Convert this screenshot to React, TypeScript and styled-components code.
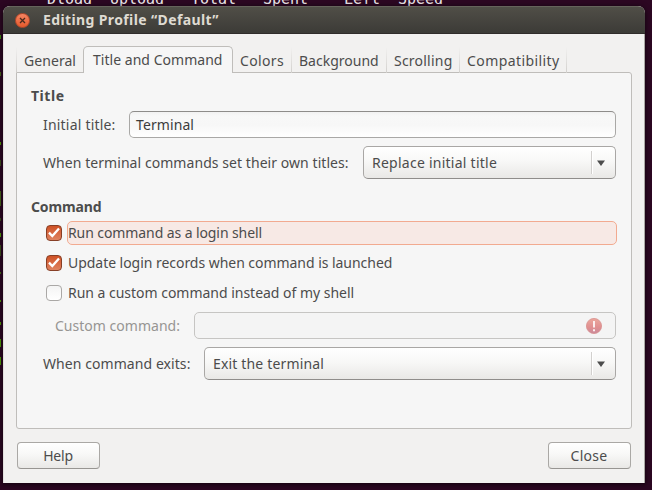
import React from "react";
import styled, { createGlobalStyle } from "styled-components";

const Global = createGlobalStyle`
  * { box-sizing: border-box; }
  html, body { margin: 0; padding: 0; overflow: hidden; }
  body { font-family: "Noto Sans", sans-serif; font-size: 14px; color: #4c4c4c; }
`;

const Desktop = styled.div`
  position: relative;
  width: 652px;
  height: 490px;
  padding: 6px 7px 7px 3px;
  background: #2c0722;
  overflow: hidden;
`;

const TerminalHeader = styled.div`
  position: absolute;
  left: 47px;
  top: -9px;
  font: 15px/17px "DejaVu Sans Mono", monospace;
  letter-spacing: -0.03px;
  white-space: pre;
  color: #eee9ec;
`;

const TerminalMark = styled.i<{ $y: number; $h: number; $c: string }>`
  position: absolute;
  left: 0;
  top: ${(p) => p.$y}px;
  width: 1px;
  height: ${(p) => p.$h}px;
  background: ${(p) => p.$c};
`;

const Window = styled.section`
  position: relative;
  width: 642px;
  height: 477px;
  display: flex;
  flex-direction: column;
  border-radius: 7px 7px 0 0;
  background: #f2f1f0;
  box-shadow: 0 1px 5px 1px rgba(0, 0, 0, 0.5);
  overflow: hidden;
`;

const TitleBar = styled.header`
  height: 28px;
  flex: none;
  display: flex;
  align-items: center;
  gap: 13px;
  padding: 0 12px;
  color: #dfdbd2;
  background: linear-gradient(#504e47, #3c3b37);
  border-top: 1px solid #65635b;
  border-bottom: 1px solid #302c2b;
`;

const CloseDot = styled.span`
  width: 15px;
  height: 15px;
  display: flex;
  border-radius: 50%;
  border: 1px solid #b8492a;
  background: linear-gradient(#f58462, #e65a2c);
  svg { margin: auto; }
`;

const Text = styled.span<{ $ls?: number; $bold?: boolean; $dim?: boolean }>`
  line-height: 20px;
  white-space: nowrap;
  letter-spacing: ${(p) => p.$ls ?? 0}px;
  font-weight: ${(p) => (p.$bold ? 700 : 400)};
  ${(p) => p.$dim && "color: #979593;"}
`;

const Body = styled.div`
  flex: 1;
  display: flex;
  flex-direction: column;
  padding: 12px 13px 14px;
  border: solid #aaa8a4;
  border-width: 0 1px 1px 0;
  border-left: 1px solid #e2e0dd;
`;

const Tabs = styled.nav`
  height: 27px;
  flex: none;
  display: flex;
  align-items: flex-end;
  margin: 0 -1px -1px;
  position: relative;
`;

const Tab = styled.div<{ $w: number; $active?: boolean; $first?: boolean; $plain?: boolean }>`
  width: ${(p) => p.$w}px;
  height: ${(p) => (p.$active ? 27 : 26)}px;
  padding: ${(p) => (p.$active ? "3px 0 0 9px" : p.$first ? "4px 0 0 8px" : "4px 0 0 7px")};
  ${(p) =>
    p.$active
      ? "background: #f6f6f6; border: 1px solid #bfbdba; border-bottom: 0; border-radius: 5px 5px 0 0;"
      : `background:
          ${p.$first ? "linear-gradient(#f2f1f0, #cfcdca) left / 1px 100% no-repeat" : p.$plain ? "linear-gradient(#f2f1f0, #d2d0cd) right / 1px 100% no-repeat" : "none"};`}
`;

const Panel = styled.main`
  height: 357px;
  width: 616px;
  flex: none;
  margin-left: -1px;
  display: flex;
  flex-direction: column;
  padding: 13px 14px 0;
  background: #f6f6f6;
  border: 1px solid #bfbdba;
  border-radius: 0 3px 3px 3px;
`;

const Row = styled.div<{ $h: number; $mt?: number; $indent?: number }>`
  height: ${(p) => p.$h}px;
  flex: none;
  margin-top: ${(p) => p.$mt ?? 0}px;
  padding-left: ${(p) => p.$indent ?? 0}px;
  display: flex;
  align-items: center;
`;

const Label = styled.label<{ $w: number }>`
  width: ${(p) => p.$w}px;
  flex: none;
  line-height: 20px;
`;

const Entry = styled.div<{ $off?: boolean }>`
  flex: 1;
  margin-right: 1px;
  height: 27px;
  display: flex;
  align-items: center;
  justify-content: ${(p) => (p.$off ? "flex-end" : "flex-start")};
  padding: 0 ${(p) => (p.$off ? 13 : 6)}px;
  color: #3c3c3c;
  border-radius: 5px;
  border: 1px solid ${(p) => (p.$off ? "#c6c5c3" : "#a9a8a6")};
  ${(p) =>
    p.$off
      ? "background: #f4f4f4;"
      : "border-top-color: #8e8c8a; background: linear-gradient(#f2f2f2, #f8f8f8 4px, #f7f7f7 13px, #fff);"}
`;

const Combo = styled.div`
  flex: 1;
  margin-right: 1px;
  height: 33px;
  display: flex;
  align-items: center;
  justify-content: space-between;
  padding: 0 10px 0 8px;
  border: 1px solid #a9a7a5;
  border-bottom-color: #8f8d8b;
  border-radius: 5px;
  background: linear-gradient(#fff, #f8f8f7 45%, #e9e8e6);
`;

const Arrow = styled.span`
  height: 23px;
  display: flex;
  align-items: center;
  padding-left: 5px;
  border-left: 1px solid #d2d0ce;
  box-shadow: inset 1px 0 #fff;
`;

const Box = styled.span<{ $on?: boolean }>`
  width: 16px;
  height: 16px;
  flex: none;
  margin-right: 5px;
  display: flex;
  border-radius: 4px;
  border: 1px solid ${(p) => (p.$on ? "#873f26" : "#aaa8a6")};
  background: ${(p) => (p.$on ? "linear-gradient(#cf5226, #df8360)" : "linear-gradient(#f4f4f4, #fff)")};
`;

const CheckLabel = styled.span<{ $focus?: boolean }>`
  flex: 1;
  height: 24px;
  display: flex;
  align-items: center;
  border-radius: 5px;
  border: 1px solid ${(p) => (p.$focus ? "#f2aa90" : "transparent")};
  background: ${(p) => (p.$focus ? "#f7e9e5" : "transparent")};
`;

const Footer = styled.footer`
  display: flex;
  justify-content: space-between;
  margin-top: 13px;
`;

const Button = styled.button`
  width: 83px;
  height: 27px;
  padding: 0 1px 0 0;
  font: inherit;
  color: inherit;
  display: flex;
  align-items: center;
  justify-content: center;
  border: 1px solid #aaa8a5;
  border-bottom-color: #979592;
  border-radius: 4px;
  background: linear-gradient(#fff, #f8f8f7 45%, #e9e8e6);
`;

const Check = ({ on, focus, ls, children }: { on?: boolean; focus?: boolean; ls?: number; children: string }) => (
  <>
    <Box $on={on}>
      {on && (
        <svg width="14" height="14" viewBox="0 0 14 14">
          <path d="M2 6.6 5.3 10 12 2.6" fill="none" stroke="#fff" strokeWidth="2.3" />
        </svg>
      )}
    </Box>
    <CheckLabel $focus={focus}><Text $ls={ls}>{children}</Text></CheckLabel>
  </>
);

const Dropdown = ({ ls, children }: { ls: number; children: string }) => (
  <Combo>
    <Text $ls={ls}>{children}</Text>
    <Arrow>
      <svg width="8" height="6" viewBox="0 0 8 6"><path d="M0 0.5H8L4 6Z" fill="#4c4c4c" /></svg>
    </Arrow>
  </Combo>
);

const marks: [number, number, string][] = [
  [35, 4, "#3f8a12"], [72, 4, "#46651a"], [142, 3, "#4e9a06"], [160, 6, "#3c4f1b"], [191, 15, "#46651a"],
  [218, 3, "#3c4f1b"], [233, 4, "#4e9a06"], [245, 11, "#3c4f1b"], [272, 2, "#3f6a16"], [300, 2, "#4e9a06"],
  [322, 3, "#4e9a06"], [339, 8, "#4e9a06"], [357, 8, "#4e9a06"],
];

export default function App() {
  return (
    <Desktop>
      <Global />
      <TerminalHeader>{"Dload  Upload   Total   Spent    Left  Speed"}</TerminalHeader>
      {marks.map(([y, h, c]) => <TerminalMark key={y} $y={y} $h={h} $c={c} />)}
      <Window>
        <TitleBar>
          <CloseDot>
            <svg width="7" height="7" viewBox="0 0 7 7"><path d="M1 1 6 6M6 1 1 6" stroke="#4a2a1e" strokeWidth="1.3" /></svg>
          </CloseDot>
          <Text $bold $ls={0.38}>Editing Profile “Default”</Text>
        </TitleBar>
        <Body>
          <Tabs>
            <Tab $w={67} $first><Text $ls={0.06}>General</Text></Tab>
            <Tab $w={150} $active><Text $ls={0.03}>Title and Command</Text></Tab>
            <Tab $w={59} $plain><Text $ls={0.35}>Colors</Text></Tab>
            <Tab $w={95} $plain><Text>Background</Text></Tab>
            <Tab $w={73} $plain><Text $ls={0.22}>Scrolling</Text></Tab>
            <Tab $w={107} $plain><Text $ls={0.41}>Compatibility</Text></Tab>
          </Tabs>
          <Panel>
            <Row $h={20}><Text $bold $ls={0.53}>Title</Text></Row>
            <Row $h={27} $mt={5} $indent={12}>
              <Label $w={86}><Text $ls={0.2}>Initial title:</Text></Label>
              <Entry><Text $ls={0.09}>Terminal</Text></Entry>
            </Row>
            <Row $h={33} $mt={8} $indent={12}>
              <Label $w={320}><Text $ls={0.06}>When terminal commands set their own titles:</Text></Label>
              <Dropdown ls={0.25}>Replace initial title</Dropdown>
            </Row>
            <Row $h={20} $mt={18}><Text $bold $ls={-0.12}>Command</Text></Row>
            <Row $h={24} $mt={4} $indent={15}><Check on focus ls={-0.09}>Run command as a login shell</Check></Row>
            <Row $h={24} $mt={6} $indent={15}><Check on ls={-0.04}>Update login records when command is launched</Check></Row>
            <Row $h={24} $mt={6} $indent={15}><Check ls={-0.02}>Run a custom command instead of my shell</Check></Row>
            <Row $h={27} $mt={7} $indent={24}>
              <Label $w={139}><Text $dim $ls={0.02}>Custom command:</Text></Label>
              <Entry $off>
                <svg width="16" height="16" viewBox="0 0 16 16">
                  <defs>
                    <linearGradient id="alert" x2="0" y2="1">
                      <stop offset="0" stopColor="#eba79c" />
                      <stop offset=".6" stopColor="#e08f90" />
                      <stop offset="1" stopColor="#c98a9c" />
                    </linearGradient>
                  </defs>
                  <circle cx="8" cy="8" r="7.6" fill="url(#alert)" stroke="#d8908f" strokeWidth=".8" />
                  <path d="M8 3v6.5M8 11.2v2" stroke="#fbeeee" strokeWidth="2" />
                </svg>
              </Entry>
            </Row>
            <Row $h={33} $mt={8} $indent={12}>
              <Label $w={161}><Text $ls={0.07}>When command exits:</Text></Label>
              <Dropdown ls={0.16}>Exit the terminal</Dropdown>
            </Row>
          </Panel>
          <Footer>
            <Button><Text $ls={-0.2}>Help</Text></Button>
            <Button><Text $ls={0.29}>Close</Text></Button>
          </Footer>
        </Body>
      </Window>
    </Desktop>
  );
}
